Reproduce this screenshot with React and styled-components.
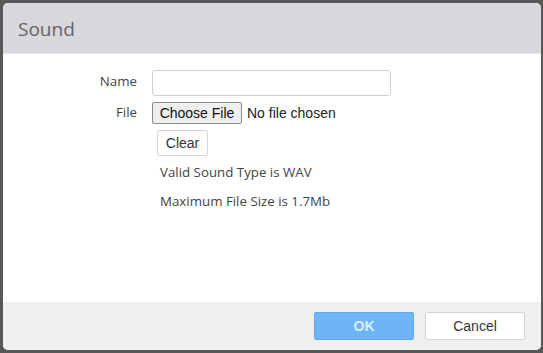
import React from "react";
import styled, { createGlobalStyle } from "styled-components";

const Global = createGlobalStyle`
  html, body { margin: 0; padding: 0; background: #575757; }
  body { width: 543px; height: 353px; overflow: hidden; }
  * { box-sizing: border-box; }
`;

const Frame = styled.div`
  padding: 3px 2px 3px 3px;
  height: 353px;
`;

const Dialog = styled.div`
  height: 347px;
  border-radius: 5px;
  overflow: hidden;
  display: flex;
  flex-direction: column;
  background: #fff;
`;

const Header = styled.div`
  height: 51px;
  flex: none;
  background: #d8d7db;
  border-bottom: 1px solid #e4e3e6;
  display: flex;
  align-items: center;
  padding-left: 15px;
  padding-top: 1px;
  font-family: "Open Sans", "Noto Sans", sans-serif;
  font-size: 19px;
  color: #646368;
`;

const Body = styled.div`
  flex: 1;
  padding-top: 16px;
  display: grid;
  grid-template-columns: 134px 1fr;
  column-gap: 15px;
  row-gap: 6px;
  align-content: start;
  font-family: "Open Sans", "Noto Sans", sans-serif;
  font-size: 13.3px;
  color: #333;
`;

const Label = styled.div`
  text-align: right;
  align-self: center;
  margin-top: ${(p) => p.$shift || 0}px;
  color: #444;
`;

const TextInput = styled.input`
  width: 239px;
  height: 26px;
  border: 1px solid #cfcfcf;
  border-radius: 3px;
  outline: none;
`;

const FileRow = styled.div`
  display: flex;
  align-items: center;
  gap: 5px;
  font-family: "Liberation Sans", Arial, sans-serif;
  font-size: 14px;
  color: #222;
`;

const FileButton = styled.span`
  height: 22px;
  width: 90px;
  display: inline-flex;
  align-items: center;
  justify-content: center;
  background: #efefef;
  border: 1px solid #8a8a8a;
  border-radius: 2px;
  color: #111;
`;

const Stack = styled.div`
  grid-column: 2;
  display: flex;
  flex-direction: column;
  align-items: flex-start;
`;

const ClearButton = styled.button`
  margin-left: 5px;
  width: 51px;
  height: 26px;
  background: #fff;
  border: 1px solid #d6d6d6;
  border-radius: 2px;
  font-family: "Liberation Sans", Arial, sans-serif;
  font-size: 14px;
  color: #333;
  padding: 0;
`;

const Note = styled.div`
  margin-left: 8px;
  margin-top: ${(p) => p.$top}px;
  line-height: 18px;
  color: #444;
`;

const Footer = styled.div`
  height: 48px;
  flex: none;
  background: #efefef;
  display: flex;
  align-items: center;
  justify-content: flex-end;
  gap: 11px;
  padding: 0 16px 0 0;
`;

const DlgButton = styled.button`
  width: 100px;
  height: 28px;
  border-radius: 2px;
  font-family: "Liberation Sans", Arial, sans-serif;
  font-size: 14px;
  padding: 0;
  background: ${(p) => (p.$primary ? "#6db5f5" : "#fff")};
  border: 1px solid ${(p) => (p.$primary ? "#62a9ea" : "#d4d4d4")};
  color: ${(p) => (p.$primary ? "#dbeeff" : "#333")};
  font-weight: ${(p) => (p.$primary ? "bold" : "normal")};
`;

export default function App() {
  return (
    <>
      <Global />
      <Frame>
        <Dialog>
          <Header>Sound</Header>
          <Body>
            <Label $shift={-5}>Name</Label>
            <div>
              <TextInput type="text" />
            </div>
            <Label $shift={-2}>File</Label>
            <FileRow>
              <FileButton>Choose File</FileButton>
              <span>No file chosen</span>
            </FileRow>
            <Stack>
              <ClearButton>Clear</ClearButton>
              <Note $top={7}>Valid Sound Type is WAV</Note>
              <Note $top={11}>Maximum File Size is 1.7Mb</Note>
            </Stack>
          </Body>
          <Footer>
            <DlgButton $primary>OK</DlgButton>
            <DlgButton>Cancel</DlgButton>
          </Footer>
        </Dialog>
      </Frame>
    </>
  );
}
